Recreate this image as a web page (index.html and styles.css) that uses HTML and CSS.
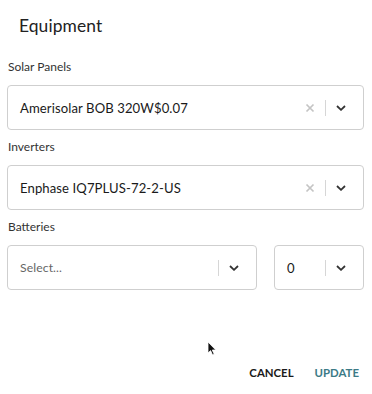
FILE: index.html
```html
<!DOCTYPE html>
<html>
<head>
<meta charset="utf-8">
<link rel="stylesheet" href="styles.css">
</head>
<body>
<div class="dialog">
  <h1 class="title">Equipment</h1>
  <div class="field">
    <div class="label">Solar Panels</div>
    <div class="select">
      <div class="value">Amerisolar BOB 320W$0.07</div>
      <div class="indicators">
        <span class="clear"><svg width="10" height="10" viewBox="0 0 10 10"><path d="M1.5 1.5 L8.5 8.5 M8.5 1.5 L1.5 8.5" stroke="#c4c4c4" stroke-width="1.7" fill="none"/></svg></span>
        <span class="sep"></span>
        <span class="chev"><svg width="10" height="6" viewBox="0 0 10 6"><path d="M1 1 L5 4.8 L9 1" stroke="#333" stroke-width="1.8" fill="none"/></svg></span>
      </div>
    </div>
  </div>
  <div class="field">
    <div class="label">Inverters</div>
    <div class="select">
      <div class="value">Enphase IQ7PLUS-72-2-US</div>
      <div class="indicators">
        <span class="clear"><svg width="10" height="10" viewBox="0 0 10 10"><path d="M1.5 1.5 L8.5 8.5 M8.5 1.5 L1.5 8.5" stroke="#c4c4c4" stroke-width="1.7" fill="none"/></svg></span>
        <span class="sep"></span>
        <span class="chev"><svg width="10" height="6" viewBox="0 0 10 6"><path d="M1 1 L5 4.8 L9 1" stroke="#333" stroke-width="1.8" fill="none"/></svg></span>
      </div>
    </div>
  </div>
  <div class="field">
    <div class="label">Batteries</div>
    <div class="row">
      <div class="select grow">
        <div class="value placeholder">Select...</div>
        <div class="indicators">
          <span class="sep"></span>
          <span class="chev"><svg width="10" height="6" viewBox="0 0 10 6"><path d="M1 1 L5 4.8 L9 1" stroke="#333" stroke-width="1.8" fill="none"/></svg></span>
        </div>
      </div>
      <div class="select qty">
        <div class="value">0</div>
        <div class="indicators">
          <span class="sep"></span>
          <span class="chev"><svg width="10" height="6" viewBox="0 0 10 6"><path d="M1 1 L5 4.8 L9 1" stroke="#333" stroke-width="1.8" fill="none"/></svg></span>
        </div>
      </div>
    </div>
  </div>
  <div class="actions">
    <button class="btn cancel">CANCEL</button>
    <button class="btn update">UPDATE</button>
  </div>
  <svg class="cursor" width="10" height="16" viewBox="0 0 10 16"><path d="M1 1 L1 12 L3.6 9.6 L5.6 14 L7.2 13.3 L5.3 9 L8.8 9 Z" fill="#111" stroke="#fff" stroke-width="0.8"/></svg>
</div>
</body>
</html>
```
FILE: styles.css
```css
* { box-sizing: border-box; }
html, body { margin: 0; padding: 0; background: #fff; }
body { font-family: Lato, "Open Sans", sans-serif; color: #222; }
.dialog { position: relative; width: 372px; height: 394px; padding: 12px 8px 0 7px; }
.title { margin: 2px 0 21px 12px; font-size: 17.4px; font-weight: 400; line-height: 24px; color: #222; letter-spacing: 0.1px; }
.field { margin-bottom: 9px; }
.label { font-size: 12px; line-height: 16px; color: #333; margin: 0 0 10px 1px; }
.select { height: 45px; border: 1px solid #cfcfcf; border-radius: 4px; display: flex; align-items: center; padding-left: 12px; background: #fff; }
.value { flex: 1; font-size: 13.1px; color: #1a1a1a; white-space: nowrap; letter-spacing: 0.1px; }
.value.placeholder { font-size: 12.2px; color: #666; }
.indicators { display: flex; align-items: center; height: 100%; padding-right: 16px; }
.clear { display: flex; width: 18px; justify-content: center; margin-right: 6px; }
.sep { width: 1px; height: 16px; background: #d6d6d6; margin-right: 9px; }
.chev { display: flex; width: 12px; justify-content: center; }
.row { display: flex; gap: 17px; }
.grow { flex: 1; }
.qty { width: 90px; flex: none; }
.actions { display: flex; justify-content: flex-end; gap: 21px; margin-top: 75px; padding-right: 5px; }
.btn { background: none; border: none; padding: 0; font-family: inherit; font-size: 11.4px; font-weight: 700; letter-spacing: 0; line-height: 16px; cursor: pointer; }
.cancel { color: #1a1a1a; }
.update { color: #3c7a86; }
.cursor { position: absolute; left: 207px; top: 341px; }
```
